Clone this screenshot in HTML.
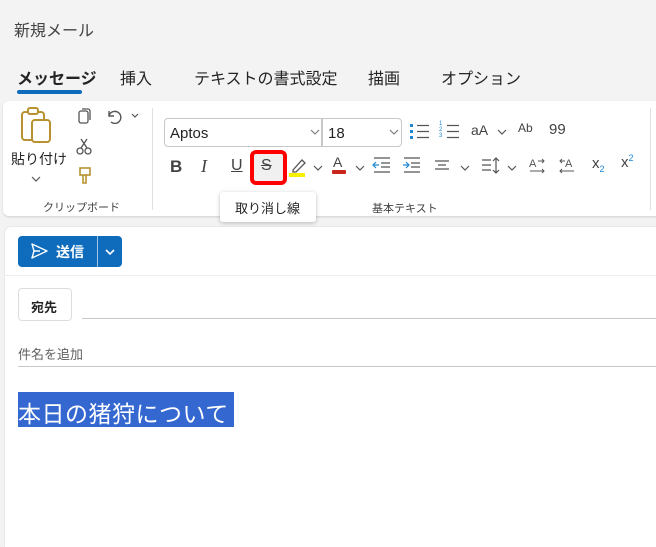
<!DOCTYPE html>
<html><head><meta charset="utf-8"><style>
*{margin:0;padding:0;box-sizing:border-box}
body{width:656px;height:536px;background:#f3f3f3;font-family:"Liberation Sans","Noto Sans CJK JP",sans-serif;position:relative;overflow:hidden;color:#242424}
.a{position:absolute;white-space:nowrap}
.g{color:#424242}
svg{position:absolute}
</style></head><body>
<div class="a" style="left:14px;top:17px;font-size:16px;color:#444">新規メール</div>
<div class="a" style="left:17px;top:65px;font-size:16px;font-weight:bold">メッセージ</div>
<div class="a" style="left:17px;top:90px;width:65px;height:4px;border-radius:2px;background:#0f6cbd"></div>
<div class="a" style="left:120px;top:65px;font-size:16px">挿入</div>
<div class="a" style="left:194px;top:65px;font-size:16px">テキストの書式設定</div>
<div class="a" style="left:368px;top:65px;font-size:16px">描画</div>
<div class="a" style="left:441px;top:65px;font-size:16px">オプション</div>

<div class="a" style="left:3px;top:101px;width:660px;height:115px;background:#fff;border-radius:6px;box-shadow:0 1px 2px rgba(0,0,0,.15)"></div>
<!-- clipboard -->
<svg style="left:20px;top:106px" width="34" height="38" viewBox="0 0 34 38"><rect x="2" y="6" width="22" height="28" rx="3" fill="none" stroke="#b89230" stroke-width="2"/><rect x="8" y="2" width="10" height="6" rx="2" fill="#fff" stroke="#b89230" stroke-width="2"/><rect x="12" y="14" width="18" height="22" rx="3" fill="#fff" stroke="#b89230" stroke-width="2"/></svg>
<div class="a" style="left:11px;top:149px;font-size:14px">貼り付け</div>
<svg style="left:31px;top:176px" width="10" height="6"><path d="M1 1l4 4 4-4" fill="none" stroke="#555" stroke-width="1.2"/></svg>
<svg style="left:78px;top:108px" width="14" height="16"><rect x="1" y="3" width="9" height="12" rx="2" fill="none" stroke="#555" stroke-width="1.3"/><path d="M4 1h6a2 2 0 0 1 2 2v9" fill="none" stroke="#555" stroke-width="1.3"/></svg>
<svg style="left:105px;top:108px" width="36" height="16"><path d="M4 3v5h5M4 8a6 6 0 1 1 2 6" fill="none" stroke="#555" stroke-width="1.4"/><path d="M27 6l3 3 3-3" fill="none" stroke="#555" stroke-width="1.2"/></svg>
<svg style="left:76px;top:138px" width="16" height="18"><circle cx="4" cy="13" r="3" fill="none" stroke="#555" stroke-width="1.3"/><circle cx="12" cy="13" r="3" fill="none" stroke="#555" stroke-width="1.3"/><path d="M5 10L11 1M11 10L5 1" stroke="#555" stroke-width="1.3"/></svg>
<svg style="left:78px;top:167px" width="14" height="18"><rect x="2" y="1" width="10" height="7" fill="none" stroke="#b89230" stroke-width="1.6"/><path d="M5 8v8h3v-8" fill="none" stroke="#b89230" stroke-width="1.6"/></svg>
<div class="a g" style="left:43px;top:199px;font-size:11px">クリップボード</div>
<div class="a" style="left:152px;top:108px;width:1px;height:102px;background:#e0e0e0"></div>
<!-- font boxes -->
<div class="a" style="left:164px;top:118px;width:158px;height:29px;border:1px solid #c8c8c8;border-radius:4px 0 0 4px;font-size:15px;padding:6px 5px">Aptos</div>
<svg style="left:310px;top:129px" width="10" height="6"><path d="M1 1l4 4 4-4" fill="none" stroke="#777" stroke-width="1.1"/></svg>
<div class="a" style="left:322px;top:118px;width:80px;height:29px;border:1px solid #c8c8c8;border-radius:0 4px 4px 0;font-size:15px;padding:6px 5px">18</div>
<svg style="left:389px;top:129px" width="10" height="6"><path d="M1 1l4 4 4-4" fill="none" stroke="#777" stroke-width="1.1"/></svg>
<!-- row1 icons -->
<svg style="left:409px;top:123px" width="22" height="16"><rect x="1" y="1" width="3" height="3" fill="#1e88d6"/><rect x="1" y="7" width="3" height="3" fill="#1e88d6"/><rect x="1" y="13" width="3" height="3" fill="#1e88d6"/><path d="M8 2.5h12M8 8.5h12M8 14.5h12" stroke="#555" stroke-width="1.2"/></svg>
<div class="a" style="left:439px;top:121px;font-size:6px;line-height:6px;color:#1e88d6">1<br>2<br>3</div>
<svg style="left:445px;top:123px" width="16" height="16"><path d="M2 2.5h12M2 8.5h12M2 14.5h12" stroke="#555" stroke-width="1.2"/></svg>
<div class="a g" style="left:471px;top:122px;font-size:14px">aA</div>
<svg style="left:497px;top:129px" width="10" height="6"><path d="M1 1l4 4 4-4" fill="none" stroke="#555" stroke-width="1.2"/></svg>
<div class="a g" style="left:518px;top:121px;font-size:12px">Ab</div>
<div class="a g" style="left:549px;top:121px;font-size:15px">99</div>
<!-- row2 -->
<div class="a g" style="left:170px;top:157px;font-size:17px;font-weight:bold">B</div>
<div class="a g" style="left:201px;top:156px;font-size:18px;font-style:italic;font-family:'Liberation Serif',serif">I</div>
<div class="a g" style="left:231px;top:157px;font-size:16px;text-decoration:underline">U</div>
<div class="a" style="left:250px;top:150px;width:37px;height:35px;border:4px solid #f00;border-radius:6px;background:#f0f0f0"></div>
<div class="a g" style="left:261px;top:157px;font-size:16px;text-decoration:line-through">S</div>
<svg style="left:289px;top:157px" width="20" height="20"><path d="M4 13L13 3l3 3-9 9H4z" fill="none" stroke="#555" stroke-width="1.3"/><rect x="0" y="16" width="16" height="4" fill="#f7f000"/></svg>
<svg style="left:313px;top:165px" width="10" height="6"><path d="M1 1l4 4 4-4" fill="none" stroke="#555" stroke-width="1.2"/></svg>
<div class="a g" style="left:333px;top:154px;font-size:14px">A</div>
<div class="a" style="left:332px;top:170px;width:14px;height:4px;background:#c8261c;border-radius:1px"></div>
<svg style="left:355px;top:165px" width="10" height="6"><path d="M1 1l4 4 4-4" fill="none" stroke="#555" stroke-width="1.2"/></svg>
<svg style="left:372px;top:157px" width="20" height="16"><path d="M2 1h16M9 6h9M9 10h9M2 15h16" stroke="#555" stroke-width="1.2"/><path d="M7 8H1M4 5L1 8l3 3" fill="none" stroke="#1e88d6" stroke-width="1.2"/></svg>
<svg style="left:402px;top:157px" width="20" height="16"><path d="M2 1h16M9 6h9M9 10h9M2 15h16" stroke="#555" stroke-width="1.2"/><path d="M1 8h6M4 5l3 3-3 3" fill="none" stroke="#1e88d6" stroke-width="1.2"/></svg>
<svg style="left:434px;top:160px" width="16" height="10"><path d="M1 1h14M4 5h8M1 9h14" stroke="#555" stroke-width="1.2"/></svg>
<svg style="left:460px;top:165px" width="10" height="6"><path d="M1 1l4 4 4-4" fill="none" stroke="#555" stroke-width="1.2"/></svg>
<svg style="left:481px;top:157px" width="20" height="18"><path d="M1 3h9M1 8h9M1 13h9M15 1v15M12 4l3-3 3 3M12 13l3 3 3-3" fill="none" stroke="#555" stroke-width="1.2"/></svg>
<svg style="left:507px;top:165px" width="10" height="6"><path d="M1 1l4 4 4-4" fill="none" stroke="#555" stroke-width="1.2"/></svg>
<svg style="left:529px;top:157px" width="16" height="18"><text x="0" y="10" font-size="11" fill="#555" font-family="Liberation Sans">A</text><path d="M9 4h6M13 2l2 2-2 2M1 14h14M13 12l2 2-2 2" fill="none" stroke="#555" stroke-width="1"/></svg>
<svg style="left:559px;top:157px" width="16" height="18"><text x="6" y="10" font-size="11" fill="#555" font-family="Liberation Sans">A</text><path d="M1 4h5M3 2L1 4l2 2M1 14h14M3 12l-2 2 2 2" fill="none" stroke="#555" stroke-width="1"/></svg>
<div class="a g" style="left:592px;top:155px;font-size:15px">x<sub style="font-size:9px;color:#1e88d6">2</sub></div>
<div class="a g" style="left:621px;top:153px;font-size:15px">x<sup style="font-size:9px;color:#1e88d6">2</sup></div>
<div class="a g" style="left:372px;top:200px;font-size:11px">基本テキスト</div>
<div class="a" style="left:650px;top:108px;width:1px;height:102px;background:#e0e0e0"></div>
<!-- tooltip -->
<div class="a" style="left:220px;top:192px;width:96px;height:30px;background:#fff;border-radius:3px;box-shadow:0 1px 4px rgba(0,0,0,.25);font-size:13px;padding:6px 15px">取り消し線</div>

<!-- compose -->
<div class="a" style="left:5px;top:227px;width:660px;height:320px;background:#fff;border-radius:6px 0 0 0;box-shadow:0 0 2px rgba(0,0,0,.12)"></div>
<div class="a" style="left:18px;top:236px;width:104px;height:31px;background:#0f6cbd;border-radius:4px"></div>
<div class="a" style="left:97px;top:236px;width:1px;height:31px;background:#fff;opacity:.6"></div>
<svg style="left:31px;top:243px" width="18" height="16"><path d="M1 1l15 7-15 7 2-7z M3 8h6" fill="none" stroke="#fff" stroke-width="1.4" stroke-linejoin="round"/></svg>
<div class="a" style="left:56px;top:242px;font-size:14px;font-weight:bold;color:#fff">送信</div>
<svg style="left:105px;top:249px" width="10" height="6"><path d="M1 1l4 4 4-4" fill="none" stroke="#fff" stroke-width="1.6"/></svg>
<div class="a" style="left:5px;top:275px;width:660px;height:1px;background:#eee"></div>
<div class="a" style="left:18px;top:288px;width:54px;height:33px;border:1px solid #ddd;border-radius:4px;font-size:13px;font-weight:bold;padding:8px 12px">宛先</div>
<div class="a" style="left:82px;top:318px;width:580px;height:1px;background:#c8c8c8"></div>
<div class="a" style="left:18px;top:344px;font-size:13px;color:#616161">件名を追加</div>
<div class="a" style="left:18px;top:366px;width:640px;height:1px;background:#c8c8c8"></div>
<div class="a" style="left:18px;top:392px;width:216px;height:35px;background:#3468d0"></div>
<div class="a" style="left:18px;top:395px;font-size:23px;color:#fff;letter-spacing:0.5px">本日の猪狩について</div>
</body></html>
